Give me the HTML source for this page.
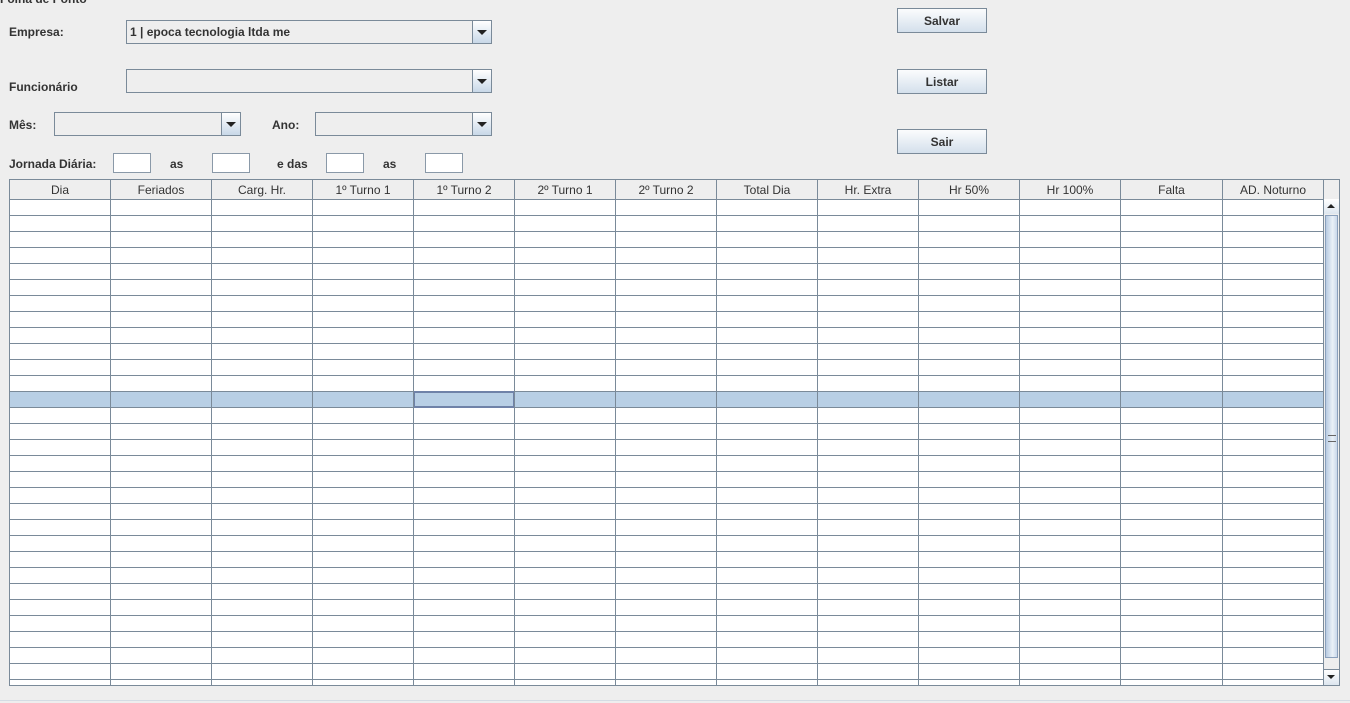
<!DOCTYPE html>
<html><head><style>
body{margin:0;width:1350px;height:703px;background:#eeeeee;font-family:"Liberation Sans",sans-serif;font-size:12px;color:#333;position:relative;overflow:hidden}
.a{position:absolute}
.lbl{font-weight:bold;color:#333}
.combo{position:absolute;border:1px solid #7a8a99;background:#eeeeee;height:24px;box-sizing:border-box}
.combo .arr{position:absolute;right:0;top:0;width:18px;height:22px;border-left:1px solid #7a8a99;background:linear-gradient(#fff,#c8d8e8)}
.combo .arr:after{content:"";position:absolute;left:4px;top:9px;border-left:5px solid transparent;border-right:5px solid transparent;border-top:5px solid #222}
.combo span{position:absolute;left:3px;top:4px;font-weight:bold;color:#333}
.tf{position:absolute;width:38px;height:20px;box-sizing:border-box;border:1px solid #8a99a8;background:#fff;top:153px}
.btn{position:absolute;left:897px;width:90px;height:25px;box-sizing:border-box;border:1px solid #7a8a99;background:linear-gradient(#fbfcfd,#d4e0ec);font-weight:bold;text-align:center;line-height:25px;color:#333}
.hd{position:absolute;top:180px;height:19px;line-height:21px;text-align:center;color:#333;background:#eeeeee;border-right:1px solid #7a8a99;box-sizing:border-box}
.cl{position:absolute;top:199px;height:486px;width:1px;background:#7a8a99}
</style></head><body>
<div class="a lbl" style="left:0;top:-8px">Folha de Ponto</div>
<div class="a lbl" style="left:9px;top:25px">Empresa:</div>
<div class="combo" style="left:126px;top:20px;width:366px"><span>1 | epoca tecnologia ltda me</span><div class="arr"></div></div>
<div class="a lbl" style="left:9px;top:80px">Funcionário</div>
<div class="combo" style="left:126px;top:69px;width:366px"><div class="arr"></div></div>
<div class="a lbl" style="left:9px;top:118px">Mês:</div>
<div class="combo" style="left:54px;top:112px;width:187px"><div class="arr"></div></div>
<div class="a lbl" style="left:272px;top:118px">Ano:</div>
<div class="combo" style="left:315px;top:112px;width:177px"><div class="arr"></div></div>
<div class="a lbl" style="left:9px;top:157px">Jornada Diária:</div>
<div class="tf" style="left:113px"></div>
<div class="a lbl" style="left:170px;top:157px">as</div>
<div class="tf" style="left:212px"></div>
<div class="a lbl" style="left:277px;top:157px">e das</div>
<div class="tf" style="left:326px"></div>
<div class="a lbl" style="left:383px;top:157px">as</div>
<div class="tf" style="left:425px"></div>
<div class="btn" style="top:8px">Salvar</div>
<div class="btn" style="top:69px">Listar</div>
<div class="btn" style="top:129px">Sair</div>

<div class="a" style="left:9px;top:179px;width:1331px;height:507px;border:1px solid #7a8a99;box-sizing:border-box;background:#eee"></div>
<div class="a" style="left:10px;top:199px;width:1313px;height:486px;background:repeating-linear-gradient(to bottom,#7a8a99 0 1px,#fff 1px 16px)"></div>
<div class="a" style="left:10px;top:392px;width:1313px;height:15px;background:#b8cfe5"></div>
<div class="a" style="left:413px;top:391px;width:102px;height:17px;border:2px solid #6f82a8;box-sizing:border-box"></div>
<div class="a" style="left:10px;top:199px;width:1313px;height:1px;background:#7a8a99"></div>

<div class="hd" style="left:10px;width:101px">Dia</div>
<div class="hd" style="left:111px;width:101px">Feriados</div>
<div class="hd" style="left:212px;width:101px">Carg. Hr.</div>
<div class="hd" style="left:313px;width:101px">1º Turno 1</div>
<div class="hd" style="left:414px;width:101px">1º Turno 2</div>
<div class="hd" style="left:515px;width:101px">2º Turno 1</div>
<div class="hd" style="left:616px;width:101px">2º Turno 2</div>
<div class="hd" style="left:717px;width:101px">Total Dia</div>
<div class="hd" style="left:818px;width:101px">Hr. Extra</div>
<div class="hd" style="left:919px;width:101px">Hr 50%</div>
<div class="hd" style="left:1020px;width:101px">Hr 100%</div>
<div class="hd" style="left:1121px;width:102px">Falta</div>
<div class="hd" style="left:1223px;width:101px">AD. Noturno</div>
<div class="cl" style="left:110px"></div><div class="cl" style="left:211px"></div><div class="cl" style="left:312px"></div><div class="cl" style="left:413px"></div><div class="cl" style="left:514px"></div><div class="cl" style="left:615px"></div><div class="cl" style="left:716px"></div><div class="cl" style="left:817px"></div><div class="cl" style="left:918px"></div><div class="cl" style="left:1019px"></div><div class="cl" style="left:1120px"></div><div class="cl" style="left:1222px"></div><div class="cl" style="left:1323px"></div>

<div class="a" style="left:1324px;top:199px;width:15px;height:486px;background:#eee"></div>
<div class="a" style="left:1324px;top:199px;width:15px;height:15px;background:linear-gradient(#fff,#dde6ef)"><div style="position:absolute;left:3px;top:5px;border-left:4px solid transparent;border-right:4px solid transparent;border-bottom:4px solid #222"></div></div>
<div class="a" style="left:1325px;top:215px;width:13px;height:443px;border:1px solid #8aa0bc;box-sizing:border-box;background:linear-gradient(to right,#b8cbe2,#eaf1f8 60%,#c9d8ea)"></div>
<div class="a" style="left:1328px;top:435px;width:8px;height:5px;border-top:1px solid #666;border-bottom:1px solid #666"></div>
<div class="a" style="left:1324px;top:669px;width:15px;height:16px;border-top:1px solid #7a8a99;box-sizing:border-box;background:linear-gradient(#fff,#dde6ef)"><div style="position:absolute;left:3px;top:5px;border-left:4px solid transparent;border-right:4px solid transparent;border-top:4px solid #222"></div></div>
<div class="a" style="left:0;top:700px;width:1350px;height:1px;background:#d4dce4"></div>
</body></html>
